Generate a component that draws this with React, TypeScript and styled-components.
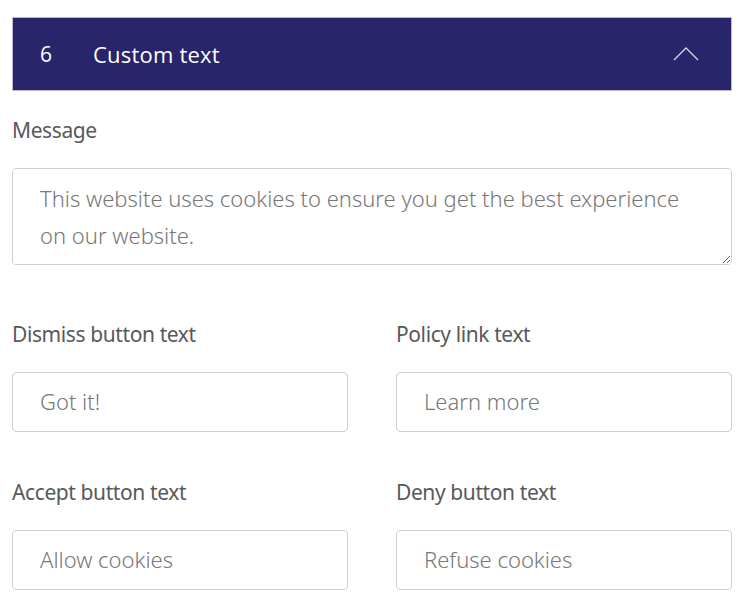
import React from "react";
import styled, { createGlobalStyle } from "styled-components";

const GlobalStyle = createGlobalStyle`
  html, body {
    margin: 0;
    padding: 0;
    background: #ffffff;
  }
  body {
    font-family: "Noto Sans", "Lato", sans-serif;
  }
`;

const Page = styled.div`
  padding: 17px 18px 20px 12px;
`;

const Header = styled.div`
  display: flex;
  align-items: center;
  height: 72px;
  padding: 0 32px 0 27px;
  background: #29256a;
  border: 1px solid #b9b8cc;
  color: #ffffff;
  font-family: "Open Sans", "Noto Sans", sans-serif;
  font-size: 22px;
`;

const StepNumber = styled.span`
  width: 53px;
  font-size: 21px;
`;

const HeaderTitle = styled.span`
  flex: 1;
  letter-spacing: 0.2px;
`;

const Chevron = styled.svg`
  width: 26px;
  height: 14px;
`;

const Field = styled.div`
  display: flex;
  flex-direction: column;
`;

const Label = styled.label`
  font-size: 21px;
  line-height: 30px;
  color: #595959;
  font-weight: 400;
  letter-spacing: -0.4px;
  margin-bottom: 23px;
`;

const MessageBlock = styled(Field)`
  margin-top: 24px;
  margin-bottom: 54px;
`;

const TextArea = styled.textarea`
  box-sizing: border-box;
  width: 100%;
  height: 97px;
  padding: 11px 27px;
  border: 1px solid #cfcfcf;
  border-radius: 4px;
  font-family: "Noto Sans", "Lato", sans-serif;
  font-weight: 300;
  font-size: 22px;
  line-height: 37px;
  color: #777777;
  resize: vertical;
  outline: none;
`;

const Grid = styled.div`
  display: grid;
  grid-template-columns: 1fr 1fr;
  column-gap: 48px;
  row-gap: 45px;
`;

const Input = styled.input`
  box-sizing: border-box;
  width: 100%;
  height: 60px;
  padding: 0 27px 2px;
  border: 1px solid #cfcfcf;
  border-radius: 4px;
  font-family: "Noto Sans", "Lato", sans-serif;
  font-weight: 300;
  font-size: 22px;
  color: #777777;
  outline: none;
`;

const fields = [
  { label: "Dismiss button text", value: "Got it!" },
  { label: "Policy link text", value: "Learn more" },
  { label: "Accept button text", value: "Allow cookies" },
  { label: "Deny button text", value: "Refuse cookies" },
];

export default function App() {
  return (
    <>
      <GlobalStyle />
      <Page>
        <Header>
          <StepNumber>6</StepNumber>
          <HeaderTitle>Custom text</HeaderTitle>
          <Chevron viewBox="0 0 26 14" fill="none">
            <path d="M1 13 L13 1 L25 13" stroke="#d8d7e6" strokeWidth="1.3" />
          </Chevron>
        </Header>
        <MessageBlock>
          <Label>Message</Label>
          <TextArea
            defaultValue="This website uses cookies to ensure you get the best experience on our website."
          />
        </MessageBlock>
        <Grid>
          {fields.map((f) => (
            <Field key={f.label}>
              <Label>{f.label}</Label>
              <Input defaultValue={f.value} />
            </Field>
          ))}
        </Grid>
      </Page>
    </>
  );
}
